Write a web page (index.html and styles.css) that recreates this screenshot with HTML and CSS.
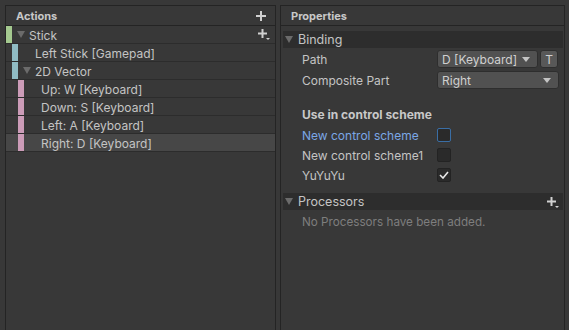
FILE: index.html
```html
<!DOCTYPE html>
<html lang="en">
<head>
    <meta charset="UTF-8">
    <title>Input Actions</title>
    <link rel="stylesheet" href="styles.css">
</head>
<body>
    <div class="window">
        <section class="panel actions">
            <div class="panel-head">
                <span>Actions</span>
                <svg class="icon-plus" width="10" height="10" viewBox="0 0 10 10"><path d="M5 0v10M0 5h10" stroke="#d0d0d0" stroke-width="2"/></svg>
            </div>
            <div class="tree">
                <div class="row depth-0">
                    <span class="bar green"></span>
                    <span class="toggle"><svg width="8" height="7" viewBox="0 0 8 7"><path d="M0 0h8L4 7z" fill="#6b6b6b"/></svg></span>
                    <span class="name">Stick</span>
                    <svg class="icon-add" width="12" height="12" viewBox="0 0 12 12"><path d="M4.5 0v9M0 4.5h9" stroke="#d0d0d0" stroke-width="2"/><path d="M8 9h4l-2 2z" fill="#d0d0d0"/></svg>
                </div>
                <div class="row depth-1">
                    <span class="bar blue"></span>
                    <span class="toggle"></span>
                    <span class="name">Left Stick [Gamepad]</span>
                </div>
                <div class="row depth-1">
                    <span class="bar blue"></span>
                    <span class="toggle"><svg width="8" height="7" viewBox="0 0 8 7"><path d="M0 0h8L4 7z" fill="#6b6b6b"/></svg></span>
                    <span class="name">2D Vector</span>
                </div>
                <div class="row depth-2">
                    <span class="bar pink"></span>
                    <span class="toggle"></span>
                    <span class="name">Up: W [Keyboard]</span>
                </div>
                <div class="row depth-2">
                    <span class="bar pink"></span>
                    <span class="toggle"></span>
                    <span class="name">Down: S [Keyboard]</span>
                </div>
                <div class="row depth-2">
                    <span class="bar pink"></span>
                    <span class="toggle"></span>
                    <span class="name">Left: A [Keyboard]</span>
                </div>
                <div class="row depth-2 selected">
                    <span class="bar pink"></span>
                    <span class="toggle"></span>
                    <span class="name">Right: D [Keyboard]</span>
                </div>
            </div>
        </section>

        <section class="panel props">
            <div class="panel-head">
                <span>Properties</span>
            </div>
            <div class="props-body">
                <div class="foldout">
                    <svg width="8" height="7" viewBox="0 0 8 7"><path d="M0 0h8L4 7z" fill="#6b6b6b"/></svg>
                    <span>Binding</span>
                </div>
                <div class="field">
                    <span class="label">Path</span>
                    <div class="dropdown path">
                        <span>D [Keyboard]</span>
                        <svg width="8" height="5" viewBox="0 0 8 5"><path d="M0 0h8L4 5z" fill="#c4c4c4"/></svg>
                    </div>
                    <div class="t-button">T</div>
                </div>
                <div class="field">
                    <span class="label">Composite Part</span>
                    <div class="dropdown wide">
                        <span>Right</span>
                        <svg width="8" height="5" viewBox="0 0 8 5"><path d="M0 0h8L4 5z" fill="#c4c4c4"/></svg>
                    </div>
                </div>

                <div class="scheme-title">Use in control scheme</div>
                <div class="scheme">
                    <span class="label focused">New control scheme</span>
                    <span class="check focus"></span>
                </div>
                <div class="scheme">
                    <span class="label">New control scheme1</span>
                    <span class="check"></span>
                </div>
                <div class="scheme">
                    <span class="label">YuYuYu</span>
                    <span class="check"><svg width="10" height="8" viewBox="0 0 10 8"><path d="M1 4l3 3 5-6" stroke="#e8e8e8" stroke-width="1.6" fill="none"/></svg></span>
                </div>

                <div class="foldout processors">
                    <svg width="8" height="7" viewBox="0 0 8 7"><path d="M0 0h8L4 7z" fill="#6b6b6b"/></svg>
                    <span>Processors</span>
                    <svg class="icon-add" width="12" height="12" viewBox="0 0 12 12"><path d="M4.5 0v9M0 4.5h9" stroke="#d0d0d0" stroke-width="2"/><path d="M8 9h4l-2 2z" fill="#d0d0d0"/></svg>
                </div>
                <div class="empty">No Processors have been added.</div>
            </div>
        </section>
    </div>
</body>
</html>
```

FILE: styles.css
```css
body {
    margin: 0;
    background-color: #383838;
    color: #c4c4c4;
    font-family: Inter, "Noto Sans", sans-serif;
    font-size: 12px;
    height: 330px;
    overflow: hidden;
}
.window {
    display: flex;
    gap: 4px;
    padding: 5px 0 0 5px;
    height: 340px;
}
.panel {
    border: 1px solid #242424;
    background-color: #383838;
    display: flex;
    flex-direction: column;
}
.actions { width: 269px; }
.props { width: 283px; }

.panel-head {
    height: 19px;
    border-bottom: 1px solid #242424;
    display: flex;
    align-items: center;
    justify-content: space-between;
    padding: 0 8px 0 10px;
    font-size: 11px;
    font-weight: bold;
    color: #c8c8c8;
}
.icon-plus { margin-right: 1px; }

.row {
    height: 17px;
    border-bottom: 1px solid #2c2c2c;
    display: flex;
    align-items: center;
}
.row.selected { background-color: #474747; }
.bar {
    width: 6px;
    height: 17px;
    flex-shrink: 0;
}
.depth-1 .bar { margin-left: 6px; }
.depth-2 .bar { margin-left: 12px; }
.bar.green { background-color: #a4c98f; }
.bar.blue { background-color: #90bcc4; }
.bar.pink { background-color: #cc9cb8; }
.toggle {
    width: 17px;
    display: flex;
    padding-left: 5px;
    box-sizing: border-box;
}
.name {
    flex-grow: 1;
    padding-top: 1px;
}
.row .icon-add { margin-right: 5px; }

.props-body { padding: 5px 1px 0 2px; }
.foldout {
    height: 17px;
    background-color: #2d2d2d;
    display: flex;
    align-items: center;
    font-size: 12.5px;
    padding-left: 2px;
}
.foldout svg:first-child { margin-right: 5px; }
.foldout span { flex-grow: 1; }
.foldout .icon-add { margin-right: 4px; margin-top: 2px; }

.field {
    display: flex;
    align-items: center;
    height: 18px;
    margin-top: 2px;
    padding-left: 19px;
}
.field + .field { margin-top: 3px; }
.label {
    width: 135px;
    flex-shrink: 0;
    padding-top: 1px;
}
.dropdown {
    height: 16px;
    background-color: #515151;
    border: 1px solid #2e2e2e;
    border-radius: 3px;
    display: flex;
    align-items: center;
    justify-content: space-between;
    padding: 0 7px 0 4px;
    color: #d0d0d0;
}
.dropdown.path { width: 88px; }
.dropdown.wide { width: 109px; }
.t-button {
    width: 16px;
    height: 16px;
    margin-left: 2px;
    background-color: #585858;
    border: 1px solid #2e2e2e;
    border-radius: 3px;
    display: flex;
    align-items: center;
    justify-content: center;
    color: #d0d0d0;
}

.scheme-title {
    margin-top: 16px;
    padding-left: 19px;
    font-weight: bold;
    height: 20px;
    line-height: 20px;
    color: #c8c8c8;
}
.scheme {
    display: flex;
    align-items: center;
    height: 20px;
    padding-left: 19px;
}
.scheme .label { padding-top: 0; }
.label.focused { color: #7ba7e6; }
.check {
    width: 12px;
    height: 12px;
    background-color: #2a2a2a;
    border: 1px solid #232323;
    border-radius: 2px;
    display: flex;
    align-items: center;
    justify-content: center;
}
.check.focus { border-color: #3a6ea5; }

.processors { margin-top: 8px; }
.empty {
    padding-left: 19px;
    height: 24px;
    line-height: 24px;
    font-size: 11.7px;
    color: #7e7e7e;
}
```
